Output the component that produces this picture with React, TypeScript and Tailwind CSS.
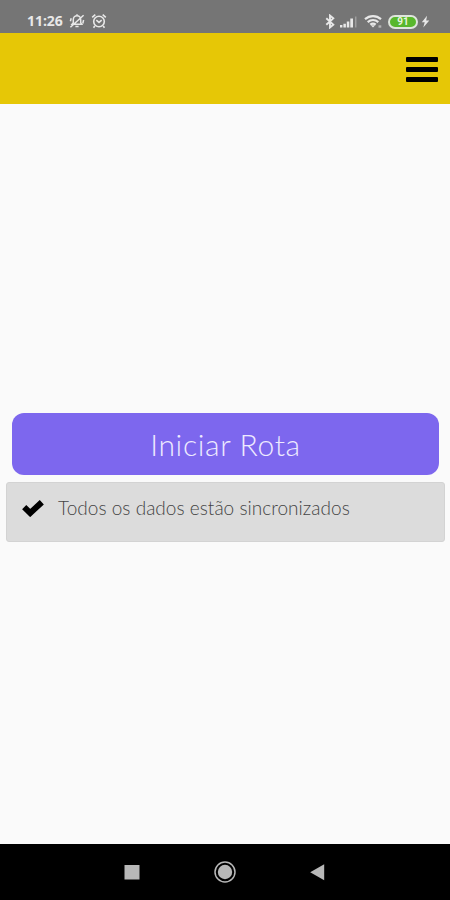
import { useState } from "react";

const BATTERY_LEVEL = 91;

function StatusBar() {
  return (
    <div className="flex h-[33px] shrink-0 items-end justify-between bg-[#757575] pr-[20px] pb-[4px] pl-[27px] text-[#e8e8e8]">
      <div className="flex items-center">
        <span className="w-[36px] font-['Open_Sans',sans-serif] text-[14px] leading-4 font-bold tracking-[-0.05px] whitespace-nowrap">11:26</span>

        {/* silent mode */}
        <svg className="ml-[6px] h-4 w-4" viewBox="0 0 16 16" fill="none" stroke="currentColor" strokeWidth="1.5">
          <path d="M3 11.3h9.8L11.7 9.6V6.4a3.7 3.7 0 0 0-7.4 0v3.2L3 11.3ZM6.4 13.5h3.2M8 1.2V3M1.4 14.3 14.6 2.2M1.4 8.2l.8-3M13.8 10.5l.8-3.5" />
        </svg>

        {/* alarm */}
        <svg className="ml-[6px] h-4 w-4" viewBox="0 0 16 16" fill="none" stroke="currentColor" strokeWidth="1.6">
          <circle cx="8" cy="8.5" r="5.3" />
          <path d="M1.2 4.4 4.3 1.6M14.8 4.4l-3.1-2.8M5.3 7.2 8 9.4l2.7-2.2M3.8 13l-1.3 1.8M12.2 13l1.3 1.8" />
        </svg>
      </div>

      <div className="flex items-center">
        {/* bluetooth */}
        <svg className="h-[15px] w-[10px]" viewBox="0 0 10 15" fill="none" stroke="currentColor" strokeWidth="1.9">
          <path d="m1.3 4.2 7 6.4L5 13.4V1.6l3.3 2.8-7 6.4" />
        </svg>

        {/* mobile signal */}
        <svg className="ml-[5px] h-[13px] w-[18px]" viewBox="0 0 18 13" fill="currentColor">
          <path d="M0 10h2.4v2.4H0zM3.4 8.7h2.5v3.7H3.4zM6.8 6.4h2.5v6H6.8zM10.3 3.4H13v9h-2.7z" />
          <path d="M15 1.5h1.5v10.9H15z" opacity=".35" />
        </svg>

        {/* wifi */}
        <svg className="ml-[6px] h-[15px] w-[20px]" viewBox="0 0 20 15" fill="none" stroke="currentColor" strokeWidth="2.2">
          <path d="M1 5.2c4.7-4.1 11.3-4.1 16 0M3.7 8.1c3.2-2.7 7.4-2.7 10.6 0M6.3 10.7c1.7-1.3 3.7-1.3 5.4 0" />
          <path d="m6.8 11.2 2.2 2.3 2.2-2.3Z" fill="currentColor" stroke="none" />
          <path d="M14.5 11.3h2.8v2.4h-2.8z" fill="currentColor" stroke="none" opacity=".55" />
        </svg>

        <div className="ml-[4px] flex h-[14px] w-[30px] items-center justify-center rounded-full border-2 border-[#dfe5dc] bg-[#58b72c] font-['Roboto',sans-serif] text-[10px] leading-none font-bold text-[#e8f5df]">
          {BATTERY_LEVEL}
        </div>

        {/* charging */}
        <svg className="ml-[3px] h-[13px] w-[9px]" viewBox="0 0 9 13" fill="currentColor">
          <path d="M6 .8.8 7.2h2.9L2.3 12.5l6-7.1H5.2Z" />
        </svg>
      </div>
    </div>
  );
}

function Header({ onToggle }: { onToggle: () => void }) {
  return (
    <header className="flex h-[71px] shrink-0 items-center justify-end bg-[#e6c706] pr-[12px]">
      <button type="button" onClick={onToggle} aria-label="Menu" className="flex w-8 flex-col gap-[5px] pt-px">
        <span className="h-[5px] rounded-[1px] bg-black" />
        <span className="h-[5px] rounded-[1px] bg-black" />
        <span className="h-[5px] rounded-[1px] bg-black" />
      </button>
    </header>
  );
}

function NavigationBar() {
  return (
    <nav className="flex h-[56px] shrink-0 items-center justify-center gap-[74px] bg-black text-[#b8b8b8]">
      <svg className="h-[22px] w-[16px]" viewBox="0 0 16 22" fill="currentColor">
        <path d="M.5 4h15v14.5H.5z" />
      </svg>
      <svg className="h-[22px] w-[22px]" viewBox="0 0 22 22">
        <circle cx="11" cy="11" r="10" fill="none" stroke="currentColor" strokeWidth="1.5" />
        <circle cx="11" cy="11" r="7.2" fill="currentColor" />
      </svg>
      <svg className="h-[22px] w-[16px]" viewBox="0 0 16 22" fill="currentColor">
        <path d="M14.2 3.2v16L.2 11.2z" />
      </svg>
    </nav>
  );
}

export default function App() {
  const [, setMenuOpen] = useState(false);

  return (
    <div className="flex h-screen w-full flex-col overflow-hidden bg-[#fafafa] font-['Lato',sans-serif]">
      <StatusBar />
      <Header onToggle={() => setMenuOpen((open) => !open)} />

      <main className="flex flex-1 flex-col px-[6px] pt-[309px]">
        <button
          type="button"
          className="mr-[5px] ml-[6px] flex h-[62px] items-center justify-center rounded-[12px] bg-[#7d67ee] pt-px text-[30px] font-light tracking-[0.65px] text-[#eeeaff]"
        >
          Iniciar Rota
        </button>

        <div className="mt-[7px] mr-[-1px] flex h-[60px] rounded-[3px] border border-[#d3d3d3] bg-[#dcdcdc] pt-[13px] pl-[15px]">
          <svg className="mt-[3px] h-[18px] w-[22px] shrink-0" viewBox="0 0 22 18">
            <path d="M2.2 8.2 8.2 14 19.8 3.2" fill="none" stroke="#000" strokeWidth="6" />
          </svg>
          <p className="ml-[14px] text-[19px] leading-6 font-light tracking-[0.03px] whitespace-nowrap text-[#444]">
            Todos os dados estão sincronizados
          </p>
        </div>
      </main>

      <NavigationBar />
    </div>
  );
}
